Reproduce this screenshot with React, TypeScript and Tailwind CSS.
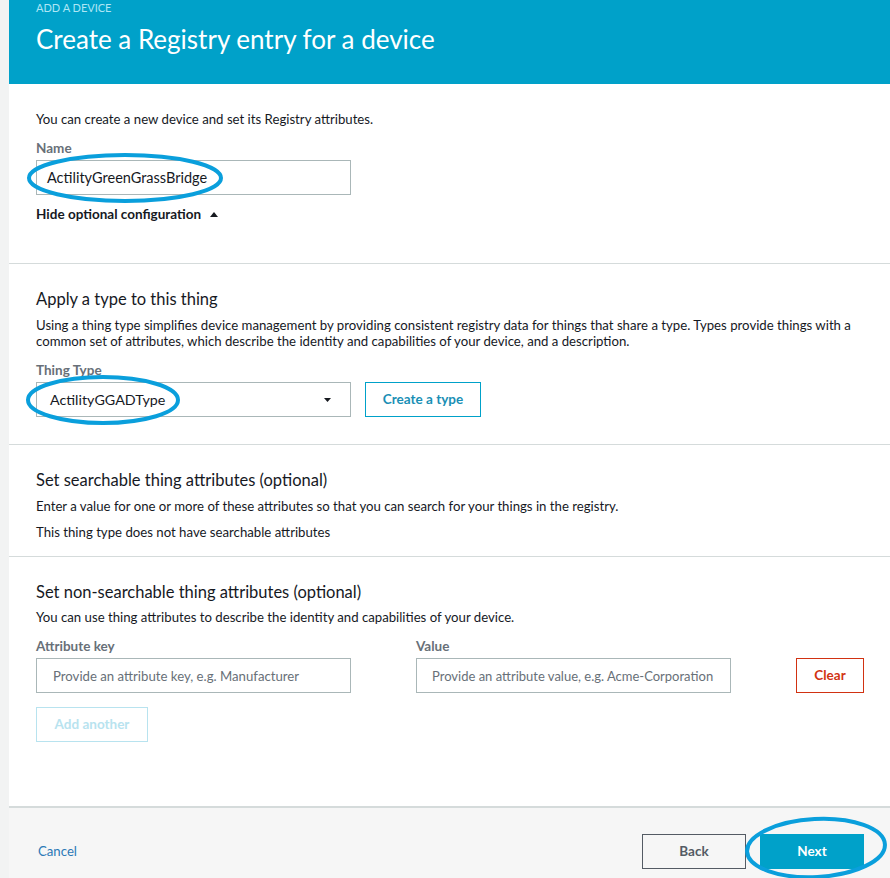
const Label = ({ children }: { children: React.ReactNode }) => (
  <div className="h-4 leading-4 text-[13.5px] font-bold text-[#687078]">{children}</div>
);

export default function App() {
  return (
    <div
      className="relative flex min-h-[878px] w-[890px] bg-[#f2f3f3] text-[#16191f]"
      style={{ fontFamily: "Lato, 'Liberation Sans', sans-serif" }}
    >
      <div className="ml-[9px] flex flex-1 flex-col bg-white">
        {/* header */}
        <div className="h-[84px] bg-[#00a1c9] pl-[27px] pt-[1px]">
          <div className="h-[14px] text-[11px] leading-[14px] text-[#aee6f5]">ADD A DEVICE</div>
          <h1 className="mt-[8px] text-[26px] leading-[32px] text-white">Create a Registry entry for a device</h1>
        </div>

        {/* name */}
        <div className="border-b border-[#d5dbdb] px-[27px] pb-[41px] pt-[27px]">
          <p className="h-4 text-[13.2px] leading-4">You can create a new device and set its Registry attributes.</p>
          <div className="mt-[13px]">
            <Label>Name</Label>
          </div>
          <div className="mt-[4px] flex h-[35px] w-[315px] items-center border border-[#aab7b8] px-[10px] text-[14.5px]">
            ActilityGreenGrassBridge
          </div>
          <div className="mt-[11px] flex h-4 items-center gap-[9px] text-[13.5px] font-bold leading-4">
            <span>Hide optional configuration</span>
            <svg width="8" height="5" viewBox="0 0 8 5">
              <path d="M0 5 L4 0 L8 5 Z" fill="#16191f" />
            </svg>
          </div>
        </div>

        {/* type */}
        <div className="border-b border-[#d5dbdb] px-[27px] pb-[27px] pt-[25px]">
          <h2 className="h-5 text-[16.5px] leading-5">Apply a type to this thing</h2>
          <p className="mt-[8px] pr-[6px] text-[13.2px] leading-4">
            Using a thing type simplifies device management by providing consistent registry data for things that share a type. Types provide things with a common set of attributes, which describe the identity and capabilities of your device, and a description.
          </p>
          <div className="mt-[13px]">
            <Label>Thing Type</Label>
          </div>
          <div className="mt-[4px] flex items-center gap-[14px]">
            <div className="flex h-[35px] w-[315px] items-center justify-between border border-[#aab7b8] pl-[13px] pr-[19px] text-[14.3px]">
              <span>ActilityGGADType</span>
              <svg width="7" height="4" viewBox="0 0 7 4">
                <path d="M0 0 L7 0 L3.5 4 Z" fill="#16191f" />
              </svg>
            </div>
            <button className="h-[35px] w-[116px] border border-[#00a1c9] text-[13.5px] font-bold text-[#1a8fb5]">
              Create a type
            </button>
          </div>
        </div>

        {/* searchable */}
        <div className="border-b border-[#d5dbdb] px-[27px] pb-[16px] pt-[25px]">
          <h2 className="h-5 text-[16.5px] leading-5">Set searchable thing attributes (optional)</h2>
          <p className="mt-[8px] h-4 text-[13.2px] leading-4">
            Enter a value for one or more of these attributes so that you can search for your things in the registry.
          </p>
          <p className="mt-[10px] h-4 text-[13.2px] leading-4">This thing type does not have searchable attributes</p>
        </div>

        {/* non-searchable */}
        <div className="flex-1 pb-[63px] pl-[27px] pr-[26px] pt-[25px]">
          <h2 className="h-5 text-[16.5px] leading-5">Set non-searchable thing attributes (optional)</h2>
          <p className="mt-[7px] h-4 text-[13.2px] leading-4">
            You can use thing attributes to describe the identity and capabilities of your device.
          </p>
          <div className="mt-[13px] flex items-end">
            <div className="w-[315px]">
              <Label>Attribute key</Label>
              <input
                className="mt-[4px] h-[35px] w-[315px] border border-[#aab7b8] px-[16px] text-[13.2px] outline-none placeholder:text-[#687078]"
                placeholder="Provide an attribute key, e.g. Manufacturer"
              />
            </div>
            <div className="ml-[65px] w-[315px]">
              <Label>Value</Label>
              <input
                className="mt-[4px] h-[35px] w-[315px] border border-[#aab7b8] pl-[15px] pr-0 text-[13px] outline-none placeholder:text-[#687078]"
                placeholder="Provide an attribute value, e.g. Acme-Corporation"
              />
            </div>
            <button className="ml-auto h-[35px] w-[68px] border border-[#d13212] text-[13.5px] font-bold text-[#d13212]">
              Clear
            </button>
          </div>
          <button className="mt-[14px] h-[35px] w-[112px] border border-[#b8e3ef] text-[13.5px] font-bold text-[#b8e3ef]">
            Add another
          </button>
        </div>

        {/* footer */}
        <div className="flex h-[72px] items-start border-t-2 border-[#d5dbdb] bg-[#f6f6f6] pl-[29px] pr-[26px] pt-[26px]">
          <a className="mt-[9px] text-[13.2px] leading-4 text-[#2c79b6]">Cancel</a>
          <div className="ml-auto flex gap-[14px]">
            <button className="h-[35px] w-[104px] border border-[#545b64] bg-[#f6f6f6] text-[13.5px] font-bold text-[#545b64]">
              Back
            </button>
            <button className="h-[35px] w-[104px] bg-[#00a1c9] text-[13.5px] font-bold text-white">Next</button>
          </div>
        </div>
      </div>

      {/* annotations drawn over the screenshot */}
      <svg className="pointer-events-none absolute left-0 top-0" width="890" height="878" viewBox="0 0 890 878">
        <g fill="none" stroke="#0a9fdc" strokeWidth="4">
          <ellipse cx="125" cy="178" rx="96" ry="23" />
          <ellipse cx="103" cy="400" rx="75" ry="23" />
          <ellipse cx="816" cy="848" rx="69" ry="29" transform="rotate(-3 816 848)" />
        </g>
      </svg>
    </div>
  );
}
